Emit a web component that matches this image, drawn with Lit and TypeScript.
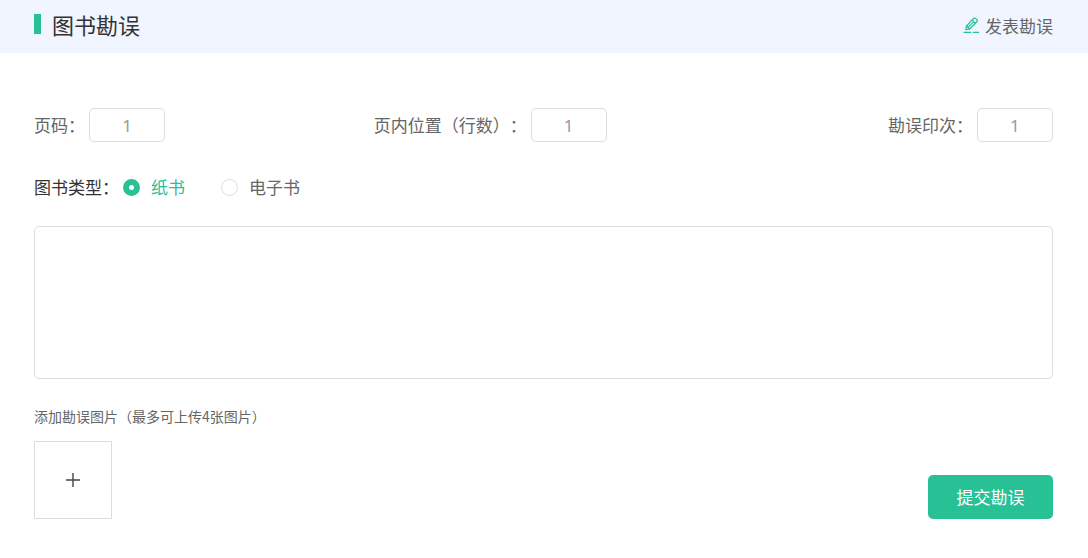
import { LitElement, html, css } from "lit";
import { customElement, state } from "lit/decorators.js";

const POSITION_FIELDS = [
  { id: "page", label: "页码：" },
  { id: "line", label: "页内位置（行数）：" },
  { id: "print", label: "勘误印次：" },
];

const BOOK_TYPES = [
  { id: "paper", label: "纸书" },
  { id: "ebook", label: "电子书" },
];

@customElement("app-root")
export class AppRoot extends LitElement {
  @state() private bookType = "paper";

  static styles = css`
    :host {
      display: block;
      min-height: 100vh;
      background: #fff;
      color: #666;
      font: 17px/24px "Noto Sans CJK SC", sans-serif;
      text-spacing-trim: space-all;
    }
    * {
      box-sizing: border-box;
    }
    .header {
      display: flex;
      align-items: center;
      justify-content: space-between;
      height: 53px;
      padding: 0 35px 2px 34px;
      background: #f0f5ff;
    }
    .title {
      display: flex;
      align-items: center;
      gap: 11px;
      margin: 0;
      padding-bottom: 4px;
      color: #333;
      font-size: 22px;
      font-weight: 400;
      line-height: 32px;
    }
    .title::before {
      content: "";
      width: 7px;
      height: 20px;
      background: #28c196;
    }
    .publish {
      display: flex;
      align-items: center;
      gap: 5px;
      color: #666;
      text-decoration: none;
    }
    .pencil {
      width: 17px;
      height: 17px;
      fill: none;
      stroke: #28c196;
      stroke-width: 1.2;
      stroke-linecap: round;
      stroke-linejoin: round;
    }
    .form {
      padding: 55px 35px 38px 34px;
    }
    .positions {
      display: grid;
      grid-template-columns: repeat(3, 1fr);
    }
    .field {
      display: flex;
      align-items: center;
      gap: 4px;
    }
    .field:last-child {
      justify-content: flex-end;
    }
    .number {
      width: 76px;
      height: 34px;
      padding: 0;
      border: 1px solid #ddd;
      border-radius: 5px;
      outline: none;
      background: #fff;
      color: #666;
      font: 17px/24px "Noto Sans", "Noto Sans CJK SC", sans-serif;
      text-align: center;
    }
    .number::placeholder {
      color: #999;
      opacity: 1;
    }
    .types {
      display: flex;
      align-items: center;
      gap: 4px;
      margin: 33px 0 27px;
      color: #333;
    }
    .options {
      display: flex;
      gap: 36px;
    }
    .option {
      display: flex;
      align-items: center;
      gap: 11px;
      color: #666;
    }
    .option:has(:checked) {
      color: #28c196;
    }
    .radio {
      appearance: none;
      width: 17px;
      height: 17px;
      margin: 0;
      border: 1px solid #ddd;
      border-radius: 50%;
      background: #fff;
    }
    .radio:checked {
      border: 6px solid #28c196;
    }
    .content {
      display: block;
      width: 100%;
      height: 153px;
      padding: 10px;
      border: 1px solid #ddd;
      border-radius: 5px;
      outline: none;
      resize: none;
      font: inherit;
    }
    .footer {
      display: flex;
      align-items: flex-end;
      justify-content: space-between;
      margin-top: 25px;
    }
    .caption {
      margin: 0 0 13px;
      font-size: 14px;
    }
    .upload {
      display: flex;
      align-items: center;
      justify-content: center;
      width: 78px;
      height: 78px;
      padding: 0;
      border: 1px solid #ddd;
      background: #fff;
    }
    .plus {
      width: 14px;
      height: 14px;
      stroke: #444;
      stroke-width: 1.4;
    }
    .submit {
      width: 125px;
      height: 44px;
      padding: 0;
      border: 0;
      border-radius: 5px;
      background: #28c196;
      color: #fff;
      font: inherit;
    }
  `;

  render() {
    return html`
      <header class="header">
        <h1 class="title">图书勘误</h1>
        <a class="publish" href="#publish">
          <svg class="pencil" viewBox="0 0 17 17" aria-hidden="true">
            <path d="M2.8 12.6 3.4 9 10.4 1.7Q11.6.6 12.8 1.6L13.8 2.5Q14.9 3.6 13.9 4.8L6.6 12 2.8 12.6Z" />
            <path d="M9.2 3.1 12.4 6.2M3.6 9 6.6 12M5.6 9.8 10 5.4M1 15.3H7.6M10 15.3H15.6" />
          </svg>
          发表勘误
        </a>
      </header>
      <form class="form" @submit=${(e: Event) => e.preventDefault()}>
        <div class="positions">
          ${POSITION_FIELDS.map(
            (f) => html`
              <div class="field">
                <label for=${f.id}>${f.label}</label>
                <input class="number" id=${f.id} type="text" inputmode="numeric" placeholder="1" />
              </div>
            `
          )}
        </div>
        <div class="types" role="radiogroup" aria-labelledby="types-label">
          <span id="types-label">图书类型：</span>
          <div class="options">
            ${BOOK_TYPES.map(
              (t) => html`
                <label class="option">
                  <input
                    class="radio"
                    type="radio"
                    name="book-type"
                    .checked=${this.bookType === t.id}
                    @change=${() => (this.bookType = t.id)}
                  />
                  ${t.label}
                </label>
              `
            )}
          </div>
        </div>
        <textarea class="content" aria-label="勘误内容"></textarea>
        <div class="footer">
          <div>
            <p class="caption">添加勘误图片（最多可上传4张图片）</p>
            <button class="upload" type="button" aria-label="添加图片">
              <svg class="plus" viewBox="0 0 14 14" aria-hidden="true">
                <path d="M7 0V14M0 7H14" />
              </svg>
            </button>
          </div>
          <button class="submit" type="submit">提交勘误</button>
        </div>
      </form>
    `;
  }
}
